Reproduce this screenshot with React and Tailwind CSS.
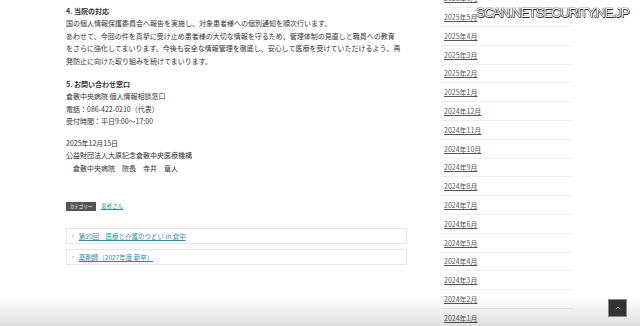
import React from "react";

const months = [
  "2025年6月","2025年5月","2025年4月","2025年3月","2025年2月","2025年1月",
  "2024年12月","2024年11月","2024年10月","2024年9月","2024年8月","2024年7月",
  "2024年6月","2024年5月","2024年4月","2024年3月","2024年2月","2024年1月",
];

export default function App() {
  const font = { fontFamily: '"Noto Sans CJK JP", "Noto Sans", sans-serif' };
  return (
    <div className="relative w-[640px] h-[326px] overflow-hidden bg-white" style={font}>
      <div className="flex">
        <main className="ml-[66px] w-[341px] pt-[4.7px] text-[7px] leading-[12.6px] text-[#333] whitespace-nowrap">
          <div className="font-bold">4. 当院の対応</div>
          <div>国の個人情報保護委員会へ報告を実施し、対象患者様への個別通知を順次行います。</div>
          <div>あわせて、今回の件を真摯に受け止め患者様の大切な情報を守るため、管理体制の見直しと職員への教育</div>
          <div>をさらに強化してまいります。今後も安全な情報管理を徹底し、安心して医療を受けていただけるよう、再</div>
          <div>発防止に向けた取り組みを続けてまいります。</div>

          <div className="mt-[10px] font-bold">5. お問い合わせ窓口</div>
          <div>倉敷中央病院 個人情報相談窓口</div>
          <div>電話：086-422-0210（代表）</div>
          <div>受付時間：平日9:00～17:00</div>

          <div className="mt-[8.6px]">2025年12月15日</div>
          <div>公益財団法人大原記念倉敷中央医療機構</div>
          <div>　倉敷中央病院　院長　寺井　章人</div>

          <div className="mt-[27.5px] flex items-center gap-[5px] h-[9px]">
            <span className="bg-[#555] text-white text-[4.5px] leading-[9px] h-[9px] px-[3px] w-[30px] text-center">カテゴリー</span>
            <span className="text-[#2f8aa3] underline text-[5.5px]">患者さん</span>
          </div>

          <div className="mt-[17px] flex flex-col gap-[5px]">
            <div className="h-[16px] border border-[#e6e6e6] flex items-center pl-[5px] gap-[5px] text-[6.5px]">
              <span className="text-[#2f8aa3] text-[6px]">‹</span>
              <span className="text-[#2f8aa3] underline">第20回　医療と介護のつどい in 倉中</span>
            </div>
            <div className="h-[16px] border border-[#e6e6e6] flex items-center pl-[5px] gap-[5px] text-[6.5px]">
              <span className="text-[#2f8aa3] text-[6px]">›</span>
              <span className="text-[#2f8aa3] underline">薬剤師（2027年度 新卒）</span>
            </div>
          </div>
        </main>

        <aside className="ml-[34px] w-[132px] -mt-[10.5px]">
          {months.map((m) => (
            <div key={m} className="h-[18.8px] border-b border-[#efefef] flex items-center pl-[3px]">
              <span className="text-[7px] text-[#555] underline">{m}</span>
            </div>
          ))}
        </aside>
      </div>

      <div
        className="absolute left-[476px] top-[3.5px] text-[13.5px] leading-[17px] text-white tracking-[-1.1px] whitespace-nowrap"
        style={{
          fontFamily: '"Liberation Sans", Arial, sans-serif',
          textShadow: "0 0 1px #000, 0 0 1px #000, 0.5px 0.5px 0 #333",
        }}
      >
        SCAN.NETSECURITY.NE.JP
      </div>

      <div className="absolute left-0 right-0 bottom-0 h-[28px] bg-gradient-to-b from-transparent to-[rgba(0,0,0,0.13)] pointer-events-none" />

      <div className="absolute left-[608px] top-[299px] w-[19px] h-[18px] bg-[#333] border border-[#8a8a8a] flex items-center justify-center">
        <svg width="6" height="4" viewBox="0 0 6 4">
          <path d="M0.8 3.3 L3 1 L5.2 3.3" fill="none" stroke="#aaa" strokeWidth="0.8" />
        </svg>
      </div>
    </div>
  );
}
